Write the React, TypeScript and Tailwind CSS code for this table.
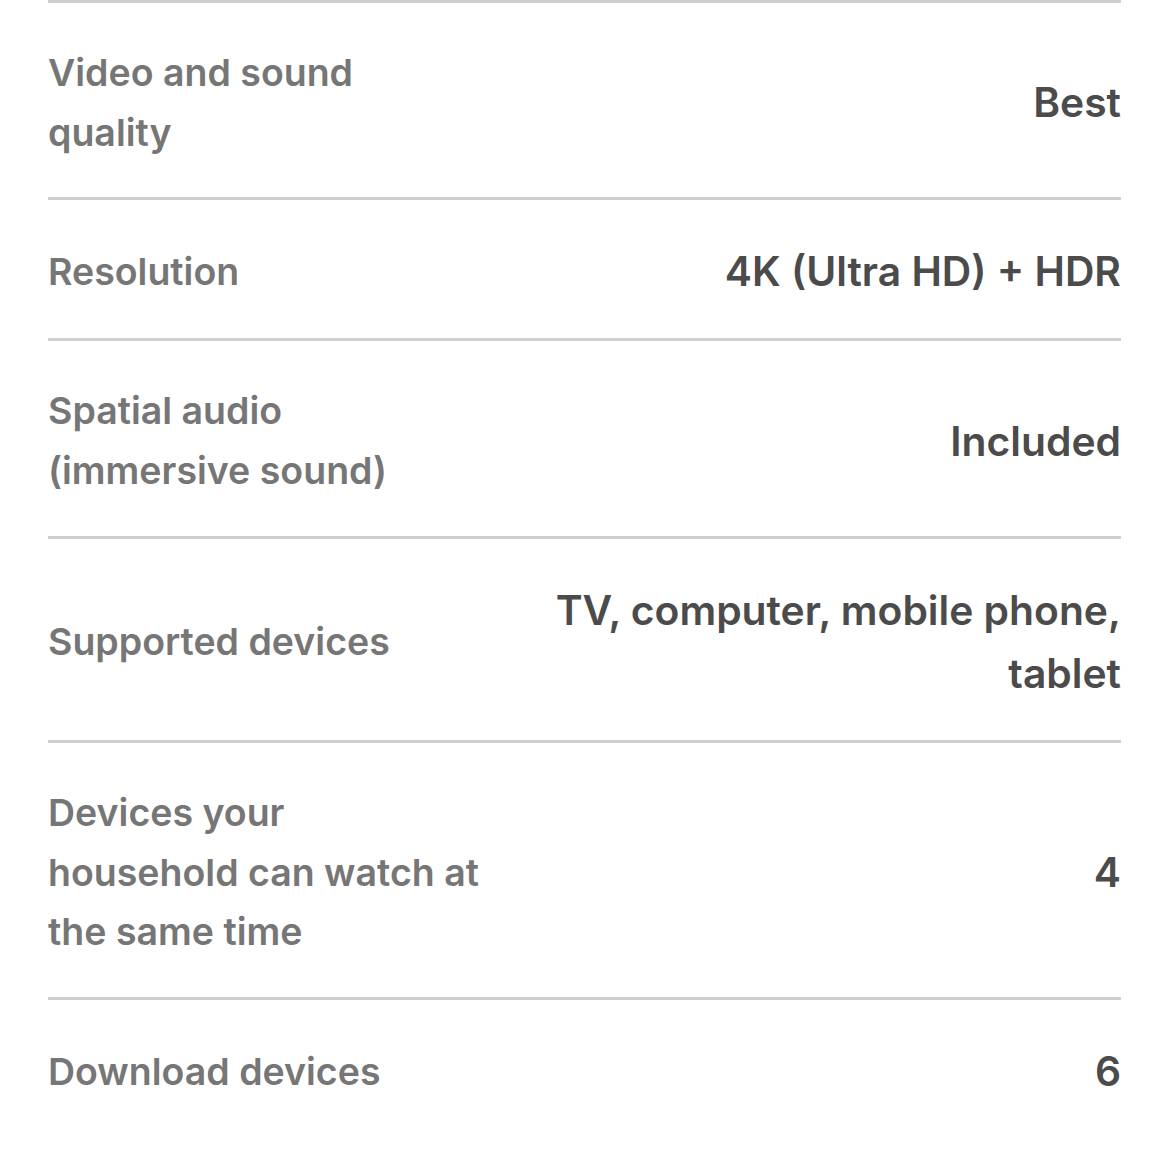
import React from 'react';

const rows = [
  { label: ['Video and sound', 'quality'], value: ['Best'] },
  { label: ['Resolution'], value: ['4K (Ultra HD) + HDR'] },
  { label: ['Spatial audio', '(immersive sound)'], value: ['Included'] },
  { label: ['Supported devices'], value: ['TV, computer, mobile phone,', 'tablet'] },
  { label: ['Devices your', 'household can watch at', 'the same time'], value: ['4'] },
  { label: ['Download devices'], value: ['6'] },
];

export default function App() {
  return (
    <div className="min-h-screen bg-white px-12" style={{ fontFamily: 'Inter, "Noto Sans", sans-serif' }}>
      <ul className="border-t-[3px] border-[#cfcfcf]">
        {rows.map((row, i) => (
          <li
            key={row.label.join(' ')}
            className={`flex items-center justify-between gap-4 pt-[40px] pb-[35px] ${i < rows.length - 1 ? 'border-b-[3px] border-[#cfcfcf]' : ''}`}
          >
            <div className="shrink-0 text-[37.5px] leading-[59.7px] font-semibold text-[#767676]">
              {row.label.map((line) => (
                <span key={line} className="block whitespace-nowrap">
                  {line}
                </span>
              ))}
            </div>
            <div className="flex-1 text-right text-[40.8px] leading-[63px] font-semibold text-[#4b4b4b]">
              {row.value.map((line) => (
                <span key={line} className="block whitespace-nowrap">
                  {line}
                </span>
              ))}
            </div>
          </li>
        ))}
      </ul>
    </div>
  );
}
